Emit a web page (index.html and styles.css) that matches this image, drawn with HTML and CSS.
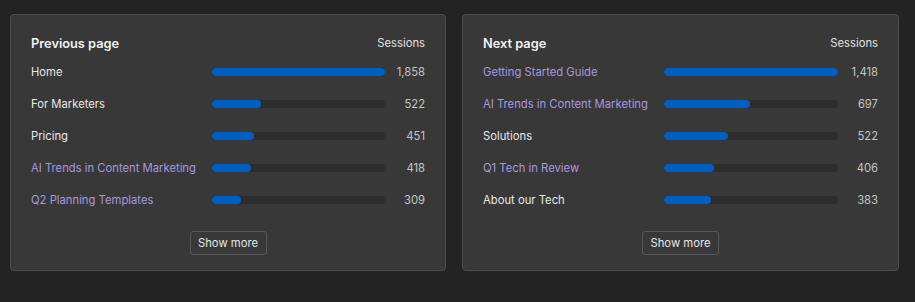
FILE: index.html
```html
<!DOCTYPE html>
<html>

<head>
	<title>Page paths</title>
	<link rel="stylesheet" href="styles.css">
</head>

<body>
	<div class="panels">
		<div class="card">
			<div class="card-head">
				<h2>Previous page</h2>
				<span>Sessions</span>
			</div>
			<div class="rows">
				<div class="row">
					<span class="label">Home</span>
					<div class="track"><div class="fill" style="width: 100%"></div></div>
					<span class="num">1,858</span>
				</div>
				<div class="row">
					<span class="label">For Marketers</span>
					<div class="track"><div class="fill" style="width: 28.1%"></div></div>
					<span class="num">522</span>
				</div>
				<div class="row">
					<span class="label">Pricing</span>
					<div class="track"><div class="fill" style="width: 24.3%"></div></div>
					<span class="num">451</span>
				</div>
				<div class="row">
					<a class="label link" href="#">AI Trends in Content Marketing</a>
					<div class="track"><div class="fill" style="width: 22.5%"></div></div>
					<span class="num">418</span>
				</div>
				<div class="row">
					<a class="label link" href="#">Q2 Planning Templates</a>
					<div class="track"><div class="fill" style="width: 16.6%"></div></div>
					<span class="num">309</span>
				</div>
			</div>
			<div class="more">
				<button>Show more</button>
			</div>
		</div>

		<div class="card">
			<div class="card-head">
				<h2>Next page</h2>
				<span>Sessions</span>
			</div>
			<div class="rows">
				<div class="row">
					<a class="label link" href="#">Getting Started Guide</a>
					<div class="track"><div class="fill" style="width: 100%"></div></div>
					<span class="num">1,418</span>
				</div>
				<div class="row">
					<a class="label link" href="#">AI Trends in Content Marketing</a>
					<div class="track"><div class="fill" style="width: 49.2%"></div></div>
					<span class="num">697</span>
				</div>
				<div class="row">
					<span class="label">Solutions</span>
					<div class="track"><div class="fill" style="width: 36.8%"></div></div>
					<span class="num">522</span>
				</div>
				<div class="row">
					<a class="label link" href="#">Q1 Tech in Review</a>
					<div class="track"><div class="fill" style="width: 28.6%"></div></div>
					<span class="num">406</span>
				</div>
				<div class="row">
					<span class="label">About our Tech</span>
					<div class="track"><div class="fill" style="width: 27%"></div></div>
					<span class="num">383</span>
				</div>
			</div>
			<div class="more">
				<button>Show more</button>
			</div>
		</div>
	</div>
</body>

</html>
```

FILE: styles.css
```css
* {
	margin: 0px;
	padding: 0px;
	box-sizing: border-box;
}

body {
	background: #232323;
	font-family: "Inter", "Liberation Sans", sans-serif;
	color: #ebebeb;
	padding: 14px 0 0 10px;
}

.panels {
	display: grid;
	grid-template-columns: 436px 437px;
	gap: 16px;
}

.card {
	background: #383838;
	border: 1px solid #4e4e4e;
	border-radius: 4px;
	padding: 19px 20px 15px 20px;
	height: 257px;
}

.card-head {
	display: flex;
	justify-content: space-between;
	align-items: center;
	height: 18px;
	margin-bottom: 4px;
}

.card-head h2 {
	font-size: 12.8px;
	font-weight: 600;
	color: #f2f2f2;
}

.card-head span {
	font-size: 11.25px;
	color: #e0e0e0;
}

.row {
	display: grid;
	grid-template-columns: 181px 1fr 40px;
	align-items: center;
	height: 32px;
	font-size: 11.25px;
}

.label {
	color: #e8e8e8;
	white-space: nowrap;
}

.link {
	color: #a797e0;
	text-decoration: none;
}

.track {
	height: 8px;
	background: #2d2d2d;
	border-radius: 4px;
	overflow: hidden;
}

.fill {
	height: 100%;
	background: #005fc4;
	border-radius: 4px;
}

.num {
	text-align: right;
	color: #c4c4c4;
}

.more {
	display: flex;
	justify-content: center;
	margin-top: 15px;
}

.more button {
	height: 24px;
	padding: 0 7.5px;
	background: transparent;
	border: 1px solid #585858;
	border-radius: 3px;
	color: #e6e6e6;
	font-family: inherit;
	font-size: 11.25px;
	cursor: pointer;
}
```
